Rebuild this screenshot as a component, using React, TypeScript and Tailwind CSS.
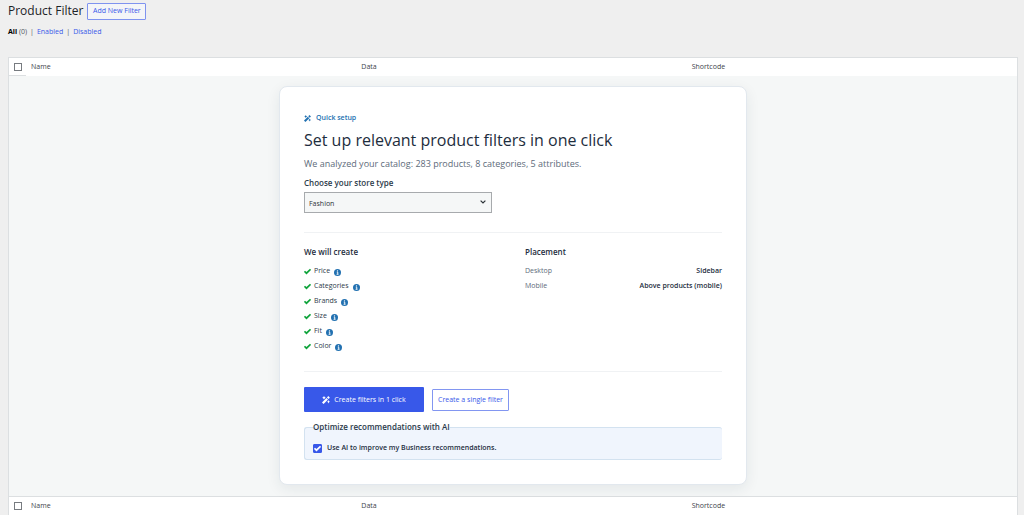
import React, { useState } from 'react';

const filters = ['Price', 'Categories', 'Brands', 'Size', 'Fit', 'Color'];

const placements = [
  { device: 'Desktop', position: 'Sidebar' },
  { device: 'Mobile', position: 'Above products (mobile)' },
];

const WandIcon: React.FC<{ className?: string }> = ({ className }) => (
  <svg viewBox="0 0 16 16" fill="currentColor" className={className} aria-hidden="true">
    <path d="M0 12.800 8.800 4l3.200 3.200L3.200 16z" />
    <path d="M9.800 3 12.600.2l3.200 3.200L13 6.200z" />
    <path d="M4 0l1.300 2.200L7.500 3.500 5.300 4.800 4 7 2.700 4.800.5 3.500l2.200-1.300zM13 8l1.100 2.400L16 11.500l-1.900 1.100L13 15l-1.100-2.400L10 11.500l1.900-1.100z" />
  </svg>
);

const CheckIcon: React.FC<{ className?: string }> = ({ className }) => (
  <svg viewBox="0 0 16 16" fill="none" stroke="currentColor" strokeWidth="4" className={className} aria-hidden="true">
    <path d="M1 7.500 5.700 12 15 3" />
  </svg>
);

const InfoIcon: React.FC = () => (
  <svg viewBox="0 0 14 14" className="mt-[1px] size-[7px] shrink-0" aria-hidden="true">
    <circle cx="7" cy="7" r="7" fill="#2271b1" />
    <path d="M5.500 6.200h2v4.300M5.200 10.500h3.800" fill="none" stroke="#fff" strokeWidth="1.800" />
    <circle cx="7" cy="3.600" r="1.300" fill="#fff" />
  </svg>
);

const ColumnLabels: React.FC<{ label: string; bordered?: boolean }> = ({ label, bordered }) => (
  <tr className="h-[18px] bg-white text-left text-[7px] text-[#3c434a]">
    <td className={`pl-[5px] ${bordered ? 'border-b border-[#dcdfe1]' : ''}`}>
      <input
        type="checkbox"
        aria-label={label}
        className="block size-2 appearance-none border border-[#777b80] bg-white"
      />
    </td>
    <th scope="col" className="pl-[5px] font-normal">Name</th>
    <th scope="col" className="pl-[5px] font-normal">Data</th>
    <th scope="col" className="pl-[5px] font-normal">Shortcode</th>
  </tr>
);

const QuickSetup: React.FC = () => {
  const [storeType, setStoreType] = useState('Fashion');
  const [useAi, setUseAi] = useState(true);

  return (
    <section className="mx-auto mt-[10px] mb-[11px] max-w-[468px] rounded-lg border border-[#e2e8ee] bg-white px-6 pt-[25px] pb-6 shadow-[0_4px_14px_rgba(30,50,70,0.08)]">
      <div className="flex h-3 items-center gap-[5px] text-[7px] font-semibold text-[#2271b1]">
        <WandIcon className="size-[7px]" />
        Quick setup
      </div>
      <h2 className="mt-[6px] text-[16px] leading-5 text-[#1d2d3d]">
        Set up relevant product filters in one click
      </h2>
      <p className="mt-2 text-[9px] leading-3 text-[#5d6b7a]">
        We analyzed your catalog: 283 products, 8 categories, 5 attributes.
      </p>

      <label htmlFor="store-type" className="mt-[7px] block text-[8px] leading-3 font-semibold text-[#2c3b4a]">
        Choose your store type
      </label>
      <div className="relative mt-[3px] w-[188px]">
        <select
          id="store-type"
          value={storeType}
          onChange={(e) => setStoreType(e.target.value)}
          className="block h-[21px] w-full appearance-none border border-[#a7aaad] bg-[#f5f7f7] px-1 pt-[3px] text-[7px] text-[#2c3338]"
        >
          <option>Fashion</option>
          <option>Electronics</option>
          <option>Furniture</option>
        </select>
        <svg viewBox="0 0 10 6" className="pointer-events-none absolute top-2 right-[6px] w-[6px]" fill="none" stroke="#2c3338" strokeWidth="2">
          <path d="m1 1 4 4 4-4" />
        </svg>
      </div>

      <div className="mt-[19px] grid grid-cols-2 gap-6 border-y border-[#f0f2f4] pt-[13px] pb-[17px]">
        <div>
          <h3 className="text-[8px] leading-3 font-semibold text-[#1d2d3d]">We will create</h3>
          <ul className="mt-[6px] text-[7px] text-[#2c3b4a]">
            {filters.map((name) => (
              <li key={name} className="flex h-[15px] items-center">
                <CheckIcon className="mr-[3px] size-[7px] text-[#0ea33a]" />
                <span className="mr-1">{name}</span>
                <InfoIcon />
              </li>
            ))}
          </ul>
        </div>
        <div>
          <h3 className="text-[8px] leading-3 font-semibold text-[#1d2d3d]">Placement</h3>
          <dl className="mt-[6px] text-[7px]">
            {placements.map(({ device, position }) => (
              <div key={device} className="flex h-[15px] items-center justify-between">
                <dt className="text-[#5d6b7a]">{device}</dt>
                <dd className="font-semibold text-[#1d2d3d]">{position}</dd>
              </div>
            ))}
          </dl>
        </div>
      </div>

      <div className="mt-[15px] flex items-center gap-2">
        <button
          type="button"
          className="flex h-[25px] w-[120px] items-center justify-center gap-1 rounded-[1px] bg-[#3858e9] pt-[1px] text-[7px] text-white"
        >
          <WandIcon className="size-2" />
          Create filters in 1 click
        </button>
        <button
          type="button"
          className="h-[22px] w-[77px] rounded-[1px] border border-[#8296f1] bg-white pt-[1px] text-[7px] text-[#3858e9]"
        >
          Create a single filter
        </button>
      </div>

      <fieldset className="mt-[9px] rounded-[3px] border border-r-0 border-[#d3e2f0] bg-[#f0f5fd] px-2 pb-[5px]">
        <legend className="text-[8px] leading-3 font-semibold text-[#2c3b4a]">
          Optimize recommendations with AI
        </legend>
        <label className="mt-[9px] flex h-3 items-center gap-[5px] text-[7px] font-semibold text-[#1d2d3d]">
          <span className="relative size-[9px]">
            <input
              type="checkbox"
              checked={useAi}
              onChange={(e) => setUseAi(e.target.checked)}
              className="block size-[9px] appearance-none rounded-[1px] border border-[#3858e9] checked:bg-[#3858e9]"
            />
            {useAi && <CheckIcon className="pointer-events-none absolute inset-[1px] size-[7px] text-white" />}
          </span>
          Use AI to improve my Business recommendations.
        </label>
      </fieldset>
    </section>
  );
};

export default function App() {
  return (
    <div className="min-h-screen bg-[#efefef] pr-[6px] pl-2 font-['Open_Sans','Noto_Sans',sans-serif]">
      <header className="flex items-center gap-1 pt-[2px]">
        <h1 className="text-[12px] leading-[18px] text-[#1d2327]">Product Filter</h1>
        <button
          type="button"
          className="h-[17px] w-[59px] rounded-[1px] border border-[#7f93ef] bg-[#f4f5f8] text-[7px] text-[#3858e9]"
        >
          Add New Filter
        </button>
      </header>

      <nav className="mt-[6px] flex h-3 items-center gap-[3px] text-[7px] text-[#50575e]">
        <span><strong className="font-bold text-black">All</strong> (0)</span>
        <span>|</span>
        <a href="#enabled" className="text-[#3858e9]">Enabled</a>
        <span>|</span>
        <a href="#disabled" className="text-[#3858e9]">Disabled</a>
      </nav>

      <table className="mt-[19px] w-full table-fixed border-separate border-spacing-0 border border-[#dcdfe1] bg-[#f5f7f7]">
        <colgroup>
          <col className="w-[17px]" />
          <col />
          <col />
          <col />
        </colgroup>
        <thead>
          <ColumnLabels label="Select all" bordered />
        </thead>
        <tbody>
          <tr>
            <td colSpan={4} className="border-b border-[#dcdfe1]">
              <QuickSetup />
            </td>
          </tr>
        </tbody>
        <tfoot>
          <ColumnLabels label="Select all (bottom)" />
        </tfoot>
      </table>
    </div>
  );
}
